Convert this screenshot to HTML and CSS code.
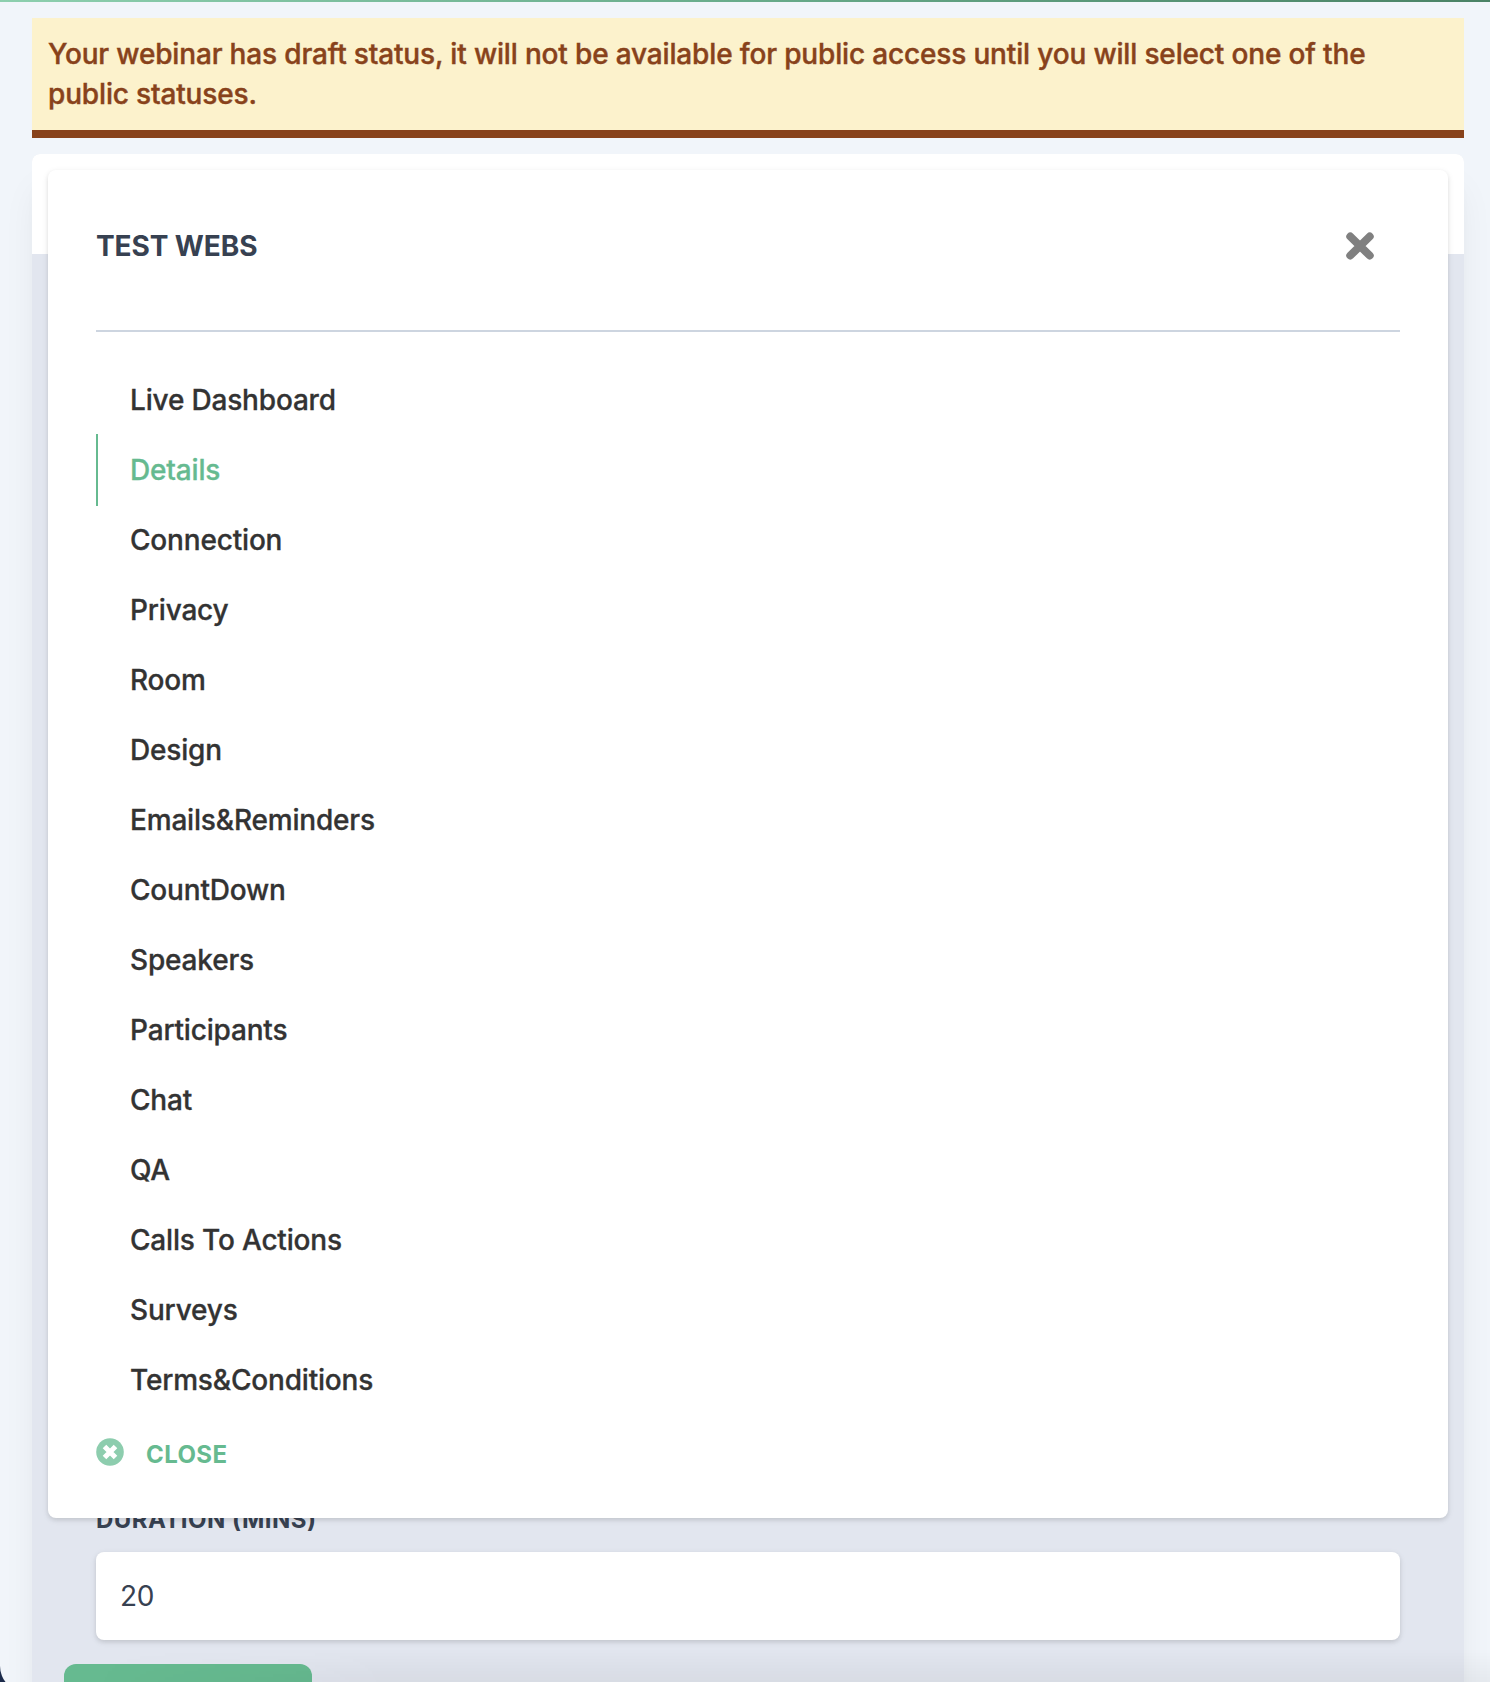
FILE: index.html
```html
<!DOCTYPE html>
<html lang="en">
<head>
<meta charset="utf-8">
<title>Test Webs</title>
<link rel="stylesheet" href="styles.css">
</head>
<body>
<div class="window">
  <div class="topline"></div>
  <main class="content">
    <div class="alert"><span class="alert-text">Your webinar has draft status, it will not be available for public access until you will select one of the public statuses.</span></div>
    <section class="card">
      <div class="card-head"></div>
      <form class="card-body">
        <label class="label" for="duration">DURATION (MINS)</label>
        <input class="input" id="duration" type="text" value="20">
        <button class="save" type="button" aria-label="Save"></button>
      </form>
      <div class="menu">
        <header class="menu-head">
          <h2 class="menu-title">TEST WEBS</h2>
          <svg class="icon-x" viewBox="0 0 28 28"><path d="M4.300 4.500l19.400 19M23.700 4.500l-19.400 19" fill="none" stroke="#808080" stroke-width="8" stroke-linecap="round"/></svg>
        </header>
        <nav class="menu-list">
          <a class="item">Live Dashboard</a>
          <a class="item active">Details</a>
          <a class="item">Connection</a>
          <a class="item">Privacy</a>
          <a class="item">Room</a>
          <a class="item">Design</a>
          <a class="item">Emails&amp;Reminders</a>
          <a class="item">CountDown</a>
          <a class="item">Speakers</a>
          <a class="item">Participants</a>
          <a class="item">Chat</a>
          <a class="item">QA</a>
          <a class="item">Calls To Actions</a>
          <a class="item">Surveys</a>
          <a class="item">Terms&amp;Conditions</a>
        </nav>
        <div class="close">
          <svg class="icon-close" viewBox="0 0 28 28"><circle cx="14" cy="14" r="13.800" fill="#8dcdae"/><path d="M8.500 8.500l11 11M19.500 8.500l-11 11" fill="none" stroke="#fff" stroke-width="5"/></svg>
          <span class="close-text">CLOSE</span>
        </div>
      </div>
    </section>
  </main>
</div>
<div class="bottom-shade"></div>
</body>
</html>
```
FILE: styles.css
```css
* { box-sizing: border-box; }
body {
  margin: 0;
  height: 1682px;
  overflow: hidden;
  position: relative;
  background: #1c2b4b;
  font-family: Inter, "Liberation Sans", sans-serif;
  color: #374151;
}
.window {
  height: 1692px;
  overflow: hidden;
  border-radius: 0 0 0 26px;
  background: #f1f5fa;
}
.topline { height: 2px; background: linear-gradient(90deg, #8dcfae, #68ab8a 50%, #4a8265); }
.content { padding: 16px 26px 0 32px; display: flex; flex-direction: column; gap: 16px; }
.alert {
  height: 120px;
  padding: 16px;
  background: #fcf2cc;
  border-bottom: 8px solid #88421b;
  color: #88421b;
  font-size: 28px;
  font-weight: 500;
  letter-spacing: -0.16px;
  -webkit-text-stroke: 0.4px currentColor;
  line-height: 40px;
}
.alert-text { display: block; max-width: 1340px; }
.card {
  position: relative;
  height: 1700px;
  border-radius: 8px;
  background: #e2e6ef;
  box-shadow: 0 30px 36px -8px rgba(0,0,0,.08), 0 20px 20px -10px rgba(0,0,0,.04);
}
.card-head { height: 100px; background: #fff; border-radius: 8px 8px 0 0; }
.card-body { padding: 1246px 64px 0; display: flex; flex-direction: column; align-items: flex-start; }
.label { height: 40px; line-height: 40px; font-size: 24px; font-weight: 700; letter-spacing: 0.48px; margin-bottom: 12px; }
.input {
  width: 100%;
  height: 88px;
  padding: 0 24px;
  border: 0;
  border-radius: 8px;
  background: #fff;
  color: #374151;
  font: 400 28px/40px Inter, "Liberation Sans", sans-serif;
  letter-spacing: -0.4px;
  box-shadow: 0 2px 6px rgba(0,0,0,.1), 0 2px 4px rgba(0,0,0,.06);
}
.save { margin: 24px 0 0 -32px; width: 248px; height: 80px; border: 0; border-radius: 12px; background: #66ba90; }
.menu {
  position: absolute;
  top: 16px;
  left: 16px;
  right: 16px;
  height: 1348px;
  padding: 0 48px;
  background: #fff;
  border-radius: 8px;
  box-shadow: 0 2px 6px rgba(0,0,0,.1), 0 2px 4px rgba(0,0,0,.06);
}
.menu-head {
  height: 162px;
  padding: 0 26px 8px 0;
  display: flex;
  align-items: center;
  justify-content: space-between;
  border-bottom: 2px solid #cdd5e0;
}
.menu-title { margin: 0; font-size: 28px; line-height: 40px; font-weight: 700; letter-spacing: -0.1px; }
.icon-x { width: 28px; height: 28px; }
.menu-list { padding-top: 33px; display: flex; flex-direction: column; }
.item {
  height: 72px;
  margin: -1px 0;
  padding-left: 32px;
  border-left: 2px solid transparent;
  color: #333;
  font-size: 28px;
  font-weight: 500;
  letter-spacing: -0.18px;
  -webkit-text-stroke: 0.3px currentColor;
  line-height: 72px;
}
.active { color: #66ba90; border-left-color: #66ba90; }
.close { display: flex; align-items: center; gap: 22px; margin-top: 22px; color: #66ba90; }
.icon-close { width: 28px; height: 28px; margin-top: -6px; }
.close-text { font-size: 24px; line-height: 36px; font-weight: 700; letter-spacing: 0.4px; }
.bottom-shade {
  position: absolute;
  left: 90px;
  right: 0;
  bottom: 0;
  height: 34px;
  background: linear-gradient(rgba(0,0,0,0), rgba(0,0,0,.045));
  -webkit-mask-image: linear-gradient(90deg, transparent, #000 300px);
  mask-image: linear-gradient(90deg, transparent, #000 300px);
}
```
